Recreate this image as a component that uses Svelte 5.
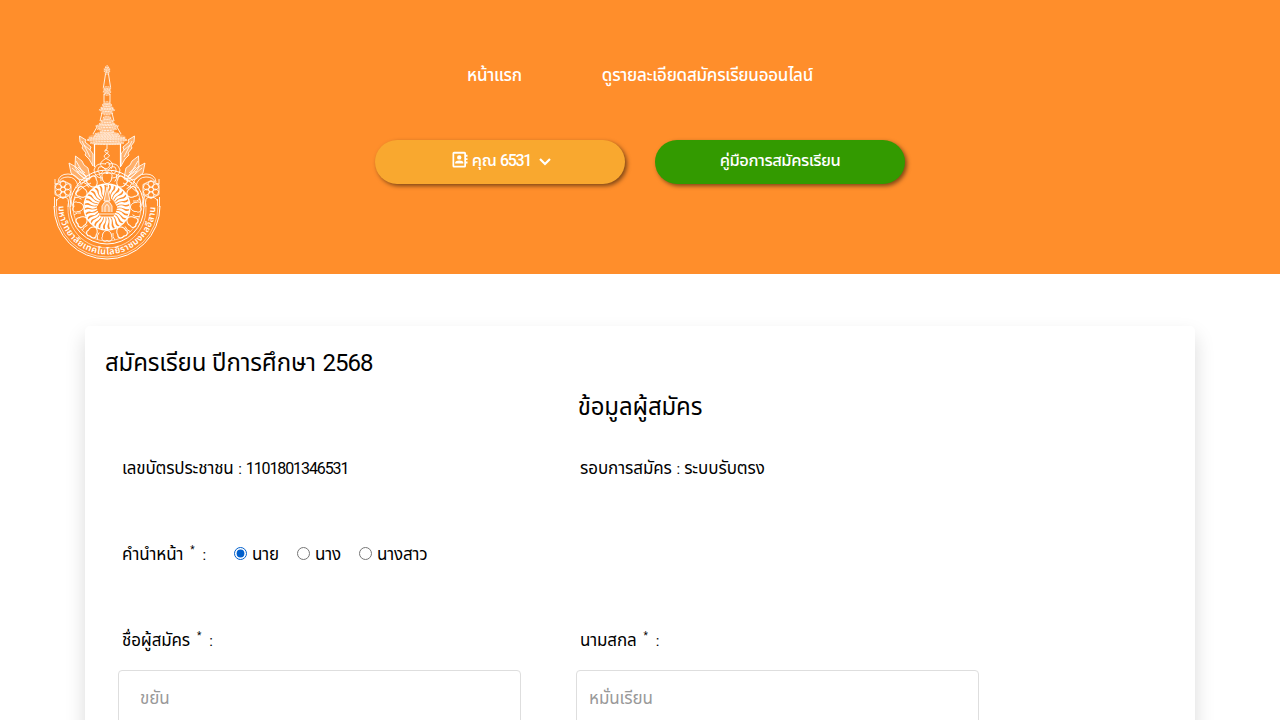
<script>
  const rays = Array.from({ length: 28 }, (_, i) => (i * 360) / 28);
  const petals = Array.from({ length: 12 }, (_, i) => i * 30);
  const tiers = [
    [66, 1.5], [68, 3], [70, 3], [72, 2], [87, 4], [89, 3.5], [91, 4], [93, 3], [102, 3.5], [104, 5], [107, 6.5], [109, 8], [112, 6],
    [117, 4], [120, 6.5], [123, 8], [125, 11.5], [128, 10], [131, 7], [133, 12], [135, 13], [137, 18], [139, 20], [142, 17]
  ];
  const titles = ['นาย', 'นาง', 'นางสาว'];
  let title = $state('นาย');
</script>

<div class="page">
  <header>
    <svg class="logo" width="108" height="196" viewBox="53 65 108 196" fill="none" stroke="#fff" stroke-width=".85">
      <path d="M105.500 74L103.500 87M108.500 74L110.500 87M104 94V102M110 94V102" />
      <path d="M104 104H110L114 110L110 114L112 120L118 127L113 131L125 136L127 140L123 143H91L87 140L89 136L101 131L96 127L102 120L104 114L100 110Z" fill="#fff" fill-opacity=".25" stroke="none" />
      {#each tiers as [y, w]}
        <ellipse cx="107" cy={y + 1} rx={w} ry="1.300" fill="#fff" fill-opacity=".25" stroke-opacity=".8" stroke-dasharray="2 .7" />
      {/each}
      <path d="M102 113L100 121M112 113L114 121M97 127L93 134M117 127L121 134" />
      <path d="M94.500 167V144H120.500V167" stroke-width="1.200" />
      <path d="M107 145V149Q102 151 108 154Q112 156 105 159Q98 163 102 167Q108 171 110 165Q109 160 105 164M105 150Q111 151 106 154Q101 157 109 160Q115 164 111 169" />
      {#each [1, -1] as side}
        <g transform="translate(107 0) scale({side} 1)">
          <path d="M27.500 136L21 140L22 142L16 147L17 150L14 154V166L18 159L22 155L21 153L25 148L24 146L27 142ZM25 141L17 157M23 145L17 150" fill="#fff" fill-opacity=".3" />
          <path d="M31.500 156L25 161L23 165L19 168L17 178L22 179L28 174L32 167ZM38 163L31 167L27 171L22 175L20 181L29 179L36 173ZM31 161L22 176M35 168L22 179M29 167L22 173M29 171L20 177" fill="#fff" fill-opacity=".3" />
          <path d="M0 174Q2 165 8 167Q11 172 6 174Q3 171 6 170M1 164Q11 162 13 170Q12 178 5 178M17 179Q26 182 31 188M16 183Q26 187 32 194" />
          <path d="M26 184Q29 174 39 174Q48 174 49 182M29 186Q31 177 39 177Q46 177 48 182M32 198Q35 202 33 207M52 179V184H49" />
          <g transform="translate(44 189.500)">
            {#each [0, 60, 120, 180, 240, 300] as a}
              <circle cy="-5.200" r="3" transform="rotate({a})" />
            {/each}
            <circle r="2.500" /><path d="M-8 -5V5L0 9L8 5V-5L0 -9Z" />
          </g>
          <path d="M52.500 197V207M50.500 199V206M39 207Q37 197 43 197Q49 197 50.500 201M36.500 207Q34 201 38 196" />
        </g>
      {/each}
      <path d="M54 206A53 53 0 0 0 160 206" stroke-width="1" />
      <path d="M56 206A51 51 0 0 0 158 206M71 194A39 39 0 1 0 143 194" stroke-width=".6" />
      <circle cx="107" cy="207" r="37" stroke-width="1" /><circle cx="107" cy="207" r="34" stroke-width=".6" />
      {#each petals as a}
        <g transform="translate(107 207) rotate({a})">
          <path d="M0 -33.500C-3 -36 -6.500 -32 -4.500 -29.500C-5 -26 -2 -23.500 0 -23.500C2 -23.500 5 -26 4.500 -29.500C6.500 -32 3 -36 0 -33.500Z" stroke-width="1" />
          <path d="M-8 -33Q-5 -30 -6 -26" />
        </g>
      {/each}
      <circle cx="107" cy="207" r="23" stroke-width="1.300" />
      {#each rays as a}
        <path transform="translate(107 207) rotate({a})" d="M-.6 -10Q-2.500 -14 -1 -17Q.5 -20 -1.800 -22.500L2 -22.500Q2.800 -19 1.500 -17Q-.2 -13 .7 -10Z" fill="#fff" stroke="none" />
      {/each}
      <path d="M107 184L103 199Q97 202 98 208Q98 213 101 217H113Q116 213 116 208Q117 202 111 199Z" fill="#ff8e2b" stroke="none" />
      <path d="M107 187L104 201H110ZM102 212V206Q107 196 112 206V212M105 212V207Q107 202 109 207V212M98 214H116M100 217H114M97 206Q99 199 103 198M117 206Q115 199 111 198" fill="#fff" fill-opacity=".35" />
      <path id="motto" d="M58.500 206A48.500 48.500 0 0 0 155.500 206" stroke="none" />
      <text class="motto" fill="#fff" stroke="none"><textPath href="#motto" textLength="151">มหาวิทยาลัยเทคโนโลยีราชมงคลอีสาน</textPath></text>
    </svg>
    <nav>
      <div class="links">
        <a href="#home">หน้าแรก</a>
        <a href="#detail">ดูรายละเอียดสมัครเรียนออนไลน์</a>
      </div>
      <div class="buttons">
        <button class="user">
          <svg width="18" height="18" viewBox="0 0 24 24" fill="#fff"><path d="M4 1h14a2 2 0 0 1 2 2v2h2v2.500h-2v2h2V12h-2v2h2v2.500h-2V20a2 2 0 0 1-2 2H4a2 2 0 0 1-2-2V3a2 2 0 0 1 2-2zM4.300 3.500v16h13.400v-16z" fill-rule="evenodd" /><circle cx="11" cy="8.500" r="2.900" /><path d="M5.500 16.500v-1c0-4 11-4 11 0v1z" /></svg>
          <span>คุณ <b>6531</b></span>
          <svg class="chevron" width="12" height="8" viewBox="0 0 12 8" fill="none" stroke="#fff" stroke-width="2.200"><path d="M1 1l5 5 5-5" /></svg>
        </button>
        <button class="guide"><span>คู่มือการสมัครเรียน</span></button>
      </div>
    </nav>
  </header>
  <main>
    <h1>สมัครเรียน ปีการศึกษา <b>2568</b></h1>
    <h2>ข้อมูลผู้สมัคร</h2>
    <div class="row info">
      <p>เลขบัตรประชาชน <i>:</i> <b>1101801346531</b></p>
      <p class="round">รอบการสมัคร <i>:</i> ระบบรับตรง</p>
    </div>
    <div class="row prefix">
      <span class="label">คำนำหน้า <sup>*</sup> <i>:</i></span>
      {#each titles as t}
        <label><input type="radio" name="title" value={t} bind:group={title} /><span>{t}</span></label>
      {/each}
    </div>
    <div class="row names">
      <div><span class="label">ชื่อผู้สมัคร <sup>*</sup> <i>:</i></span><input class="first" placeholder="ขยัน" /></div>
      <div><span class="label">นามสกล <sup>*</sup> <i>:</i></span><input placeholder="หมั่นเรียน" /></div>
    </div>
  </main>
</div>

<style>
  :global(body) { margin: 0; background: #fff; }
  .page { height: 720px; overflow: hidden; font-family: Roboto, "Noto Sans Thai", sans-serif; font-size: 17px; letter-spacing: -.15px; color: #000; }
  * { box-sizing: border-box; }
  b { font-weight: inherit; font-size: 16px; letter-spacing: -1.1px; }
  i { font-style: normal; font-size: 15px; margin-left: .5px; }
  header { height: 274px; background: #ff8e2b; display: flex; }
  .logo { margin: 65px 0 0 53px; flex: none; }
  .motto { font-size: 9px; font-weight: 600; letter-spacing: 0; }
  nav { margin-left: 214px; padding-top: 63px; color: #fff; }
  .links { display: flex; gap: 80px; padding-left: 92px; height: 77px; line-height: 25px; letter-spacing: -.27px; }
  .links a { color: #fff; text-decoration: none; font-weight: 500; white-space: nowrap; }
  .buttons { display: flex; gap: 30px; }
  button { width: 250px; height: 44px; border: 0; border-radius: 22px; color: #fff; font: 500 16.5px Roboto, "Noto Sans Thai", sans-serif; letter-spacing: -.45px; display: flex; align-items: center; justify-content: center; padding: 0 0 3px; box-shadow: 2px 2px 4px rgba(0, 0, 0, .5); white-space: nowrap; }
  .user { background: #f9a82f; gap: 3px; padding-left: 2px; }
  .user > svg:first-child { margin-top: -1px; }
  .user b { letter-spacing: -1.3px; }
  .guide { background: #339a00; }
  .user .chevron { margin: 2px 0 0 5px; }
  main { width: 1110px; height: 600px; margin: 52px auto 0; border-radius: 5px; background: #fff; box-shadow: 0 10px 20px rgba(0, 0, 0, .15); padding: 19px 20px; }
  h1, h2, p { margin: 0; font-weight: 400; white-space: nowrap; }
  h1, h2 { font-size: 24px; line-height: 36px; letter-spacing: -.15px; }
  h1 b { font-size: 24px; letter-spacing: -1px; margin-left: 1px; }
  h2 { text-align: center; margin-top: 8px; }
  .row { display: flex; padding-left: 17px; line-height: 24px; white-space: nowrap; }
  .info { margin-top: 31px; height: 24px; }
  .info p { width: 458px; }
  .info .round { letter-spacing: -.08px; }
  .prefix { margin-top: 62px; height: 24px; align-items: center; }
  sup { font-size: 10px; line-height: 0; margin: 0 3.5px 0 3px; }
  .prefix .label { width: 112px; }
  .prefix label { display: flex; align-items: center; gap: 5px; height: 24px; margin-right: 18px; }
  .prefix input { margin: 0 0 2px; width: 13px; height: 13px; accent-color: #005fcc; }
  .prefix label span { margin-top: -1px; }
  .names { margin-top: 62px; padding-left: 13px; gap: 55px; }
  .names > div { width: 403px; }
  .names .label { display: block; height: 24px; padding-left: 4px; }
  .names input { display: block; width: 403px; height: 56px; margin-top: 18px; border: 1px solid #dedede; border-radius: 4px; padding: 0 12px; font: 17px Roboto, "Noto Sans Thai", sans-serif; letter-spacing: -.1px; outline: 0; }
  .names .first { padding-left: 21px; }
  input::placeholder { color: #999; opacity: 1; }
</style>
